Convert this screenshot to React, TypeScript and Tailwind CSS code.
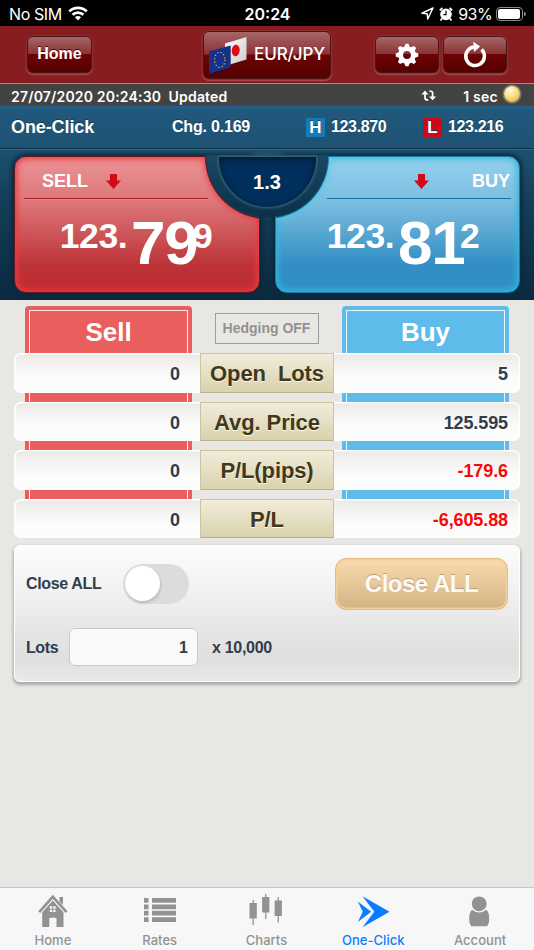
import type { ReactNode } from 'react';

const rows = [
  { label: 'Open  Lots', sell: '0', buy: '5', negative: false },
  { label: 'Avg. Price', sell: '0', buy: '125.595', negative: false },
  { label: 'P/L(pips)', sell: '0', buy: '-179.6', negative: true },
  { label: 'P/L', sell: '0', buy: '-6,605.88', negative: true },
];

const StatusBar = () => (
  <div className="flex h-[26px] items-center bg-black pl-[9px] pr-[8px] pt-px font-['Inter'] text-[16px] text-white">
    <div className="flex flex-1 items-center gap-[6px]">
      <span className="tracking-[-0.4px]">No SIM</span>
      <svg width="20" height="15" viewBox="0 0 20 15" fill="none" stroke="white" strokeWidth="2.7">
        <path d="M1.2 5.4a12.6 12.6 0 0 1 17.6 0" />
        <path d="M4.6 8.8a7.8 7.8 0 0 1 10.8 0" />
        <path d="M10 14.6 6.9 11.3a4.6 4.6 0 0 1 6.2 0Z" fill="white" stroke="none" />
      </svg>
    </div>
    <span className="font-semibold">20:24</span>
    <div className="flex flex-1 items-center justify-end">
      <svg width="13" height="13" viewBox="0 0 13 13" fill="none" stroke="white" strokeWidth="1.5" strokeLinejoin="round">
        <path d="M12 1 1 6.2l5.2.6.5 5.2Z" />
      </svg>
      <svg className="ml-[5px]" width="14" height="14" viewBox="0 0 13 13">
        <circle cx="6.5" cy="6.8" r="5.4" fill="white" />
        <path d="M.7 3.2 3.2.9M12.3 3.2 9.8.9M2.8 10.7l-1.4 1.8M10.2 10.7l1.4 1.8" stroke="white" strokeWidth="1.7" />
        <path d="M6.5 3.5v3.5H4" fill="none" stroke="black" strokeWidth="1.1" />
      </svg>
      <span className="ml-[5px] tracking-[-0.6px]">93%</span>
      <span className="ml-[4px] flex h-[14px] w-[27px] rounded-[4px] border border-[#8a8a8a] p-[1px]">
        <span className="flex-1 rounded-[2px] bg-white" />
        <span className="w-[1px]" />
      </span>
      <span className="ml-[1px] h-[4px] w-[2px] rounded-r-full bg-[#8a8a8a]" />
    </div>
  </div>
);

const GlossButton = ({ className, children }: { className: string; children: ReactNode }) => (
  <button
    className={`flex items-center justify-center rounded-[6px] border border-[#4c1517] bg-[linear-gradient(180deg,#a66668_0%,#8a3335_48%,#6b0305_50%,#560000_100%)] shadow-[0_0_0_1px_#8b2d30,0_1px_1px_1px_#a85255] ${className}`}
  >
    {children}
  </button>
);

const Flags = () => (
  <svg width="38" height="38" viewBox="0 0 38 38">
    <defs>
      <linearGradient id="jp" x1="0" x2="1" y1="0" y2="1">
        <stop offset="0" stopColor="#fff" />
        <stop offset="1" stopColor="#c9c9c9" />
      </linearGradient>
    </defs>
    <path d="M16 7.5 37.5 1v22.5L16 30Z" fill="url(#jp)" />
    <ellipse cx="26.7" cy="14.5" rx="4" ry="5.7" fill="#e30b12" transform="rotate(8 26.7 14.5)" />
    <path d="M.5 16 22 10v22L.5 38.5Z" fill="#000" opacity=".35" />
    <path d="M0 15.5 21.5 9.5v22L0 38Z" fill="#16308c" />
    <ellipse cx="10.8" cy="23.8" rx="5.2" ry="7.6" fill="none" stroke="#d3bd4a" strokeWidth="1.2" strokeDasharray="1.3 2.12" />
  </svg>
);

const NavBar = () => (
  <div className="flex h-[57px] items-center bg-[#871d20] px-[27px] font-['Liberation_Sans'] font-bold text-white">
    <GlossButton className="h-[37px] w-[65px] text-[16px] [text-shadow:0_-1px_0_#400]">
      <span className="-mt-px">Home</span>
    </GlossButton>
    <GlossButton className="ml-[111px] h-[48px] w-[128px] gap-[7px]">
      <Flags />
      <span className="font-['Inter'] text-[17px] font-medium tracking-[-0.1px]">EUR/JPY</span>
    </GlossButton>
    <GlossButton className="ml-[44px] h-[37px] w-[64px]">
      <svg width="24" height="24" viewBox="-12 -12 24 24" fill="white">
        <circle r="6.3" fill="none" stroke="white" strokeWidth="4.8" />
        {[0, 45, 90, 135, 180, 225, 270, 315].map((a) => (
          <path key={a} d="M-2.9-7.5-1.5-11.3H1.5L2.9-7.5Z" transform={`rotate(${a})`} />
        ))}
      </svg>
    </GlossButton>
    <GlossButton className="ml-[4px] h-[37px] w-[64px]">
      <svg width="26" height="28" viewBox="0 0 26 28">
        <path d="M19.6 8.6A9.3 9.3 0 1 1 12 6" fill="none" stroke="white" strokeWidth="3.5" />
        <path d="M11.3.8 18.2 5.6 12 11Z" fill="white" />
      </svg>
    </GlossButton>
  </div>
);

const UpdateBar = () => (
  <div className="flex h-[23px] items-center border-t border-[#989393] bg-[#434343] pl-[11px] pr-[14px] font-['Inter'] text-[14px] font-semibold text-white">
    <span className="flex-1 whitespace-pre pt-[3px] tracking-[0.18px]">27/07/2020 20:24:30  Updated</span>
    <svg width="16" height="13" viewBox="0 0 16 13" fill="none" stroke="white" strokeWidth="1.7">
      <path d="M4 4v5q0 2 3.3 2M8.3 2q3.3 0 3.3 2V9" />
      <path d="M.5 5.4 4 1.6 7.5 5.4ZM8.1 7.4 11.6 11.2l3.5-3.8Z" fill="white" stroke="none" />
    </svg>
    <span className="ml-[26px] pt-[3px] tracking-[0.25px]">1 sec</span>
    <span className="ml-[6px] -mt-[2px] h-[16px] w-[16px] rounded-full bg-[radial-gradient(circle_at_40%_30%,#fffbe0,#f8dc7c_45%,#eaa21d)] shadow-[0_0_0_1.5px_#777]" />
  </div>
);

const SummaryBar = () => (
  <div className="flex h-[43px] items-center border-b border-[#092f45] bg-[linear-gradient(180deg,#24608a_0,#20587b_5px,#1f5273_100%)] pl-[11px] text-[16px] font-bold text-white [text-shadow:0_-1px_0_#153c54]">
    <span className="w-[161px] text-[18px] tracking-[-0.1px]">One-Click</span>
    <span className="w-[134px] tracking-[-0.2px]">Chg. 0.169</span>
    <span className="flex h-[19px] w-[19px] items-center justify-center bg-[#187ab5] pt-px text-[17px]">H</span>
    <span className="ml-[6px] w-[92px] tracking-[-0.35px]">123.870</span>
    <span className="flex h-[19px] w-[19px] items-center justify-center bg-[#cf0818] pt-px text-[17px]">L</span>
    <span className="ml-[6px] tracking-[-0.35px]">123.216</span>
  </div>
);

const DownArrow = () => (
  <svg width="15" height="15" viewBox="0 0 15 15">
    <path d="M4 0h7v6.5h4L7.5 15 0 6.5h4Z" fill="#d20a18" />
  </svg>
);

const Price = ({ head, big, tail }: { head: string; big: string; tail: string }) => (
  <div className="flex items-start text-[35.5px] leading-[40px]">
    <span className="w-[75px] tracking-[-0.35px]">{head}</span>
    <span className="w-[63px] text-[62px] leading-[53px] tracking-[-1.2px]">{big}</span>
    <span className="ml-[-1px]">{tail}</span>
  </div>
);

const Quotes = () => (
  <div className="relative flex h-[151px] justify-between border-b border-[#092b42] border-t border-t-[#246e99] bg-[linear-gradient(180deg,#1d506f_0%,#143e59_35%,#0a2a40_100%)] px-[14px] pt-[6px] font-bold text-white">
    <button className="relative flex h-[137px] w-[246px] flex-col items-start overflow-hidden rounded-[12px] border border-[#64171f] bg-[linear-gradient(180deg,#eb9396_0%,#dc7679_34%,#bd3338_80%,#bf2b30_100%)] shadow-[0_0_4px_2px_#08283c,inset_0_0_6px_2px_#ed3b43]">
      <div className="flex items-center pl-[9px] pt-[12px] text-[18px] leading-[24px]">
        <span className="w-[82px]">SELL</span>
        <DownArrow />
      </div>
      <div className="ml-[9px] mt-[5px] h-[2px] w-[184px] border-b border-[#ea8588] bg-[#a32027]" />
      <div className="ml-[41px] mt-[16px]"><Price head="123." big="79" tail="9" /></div>
      <span className="absolute -top-[61px] left-[191px] h-[122px] w-[122px] rounded-full bg-[#143e59] shadow-[0_0_0_1px_#64171f,0_0_6px_2px_#ed3b43]" />
    </button>
    <button className="relative flex h-[137px] w-[245px] flex-col items-start overflow-hidden rounded-[12px] border border-[#1c7ba1] bg-[linear-gradient(180deg,#96d1ed_0%,#7abde0_34%,#328ec3_80%,#3090c5_100%)] shadow-[0_0_4px_2px_#08283c,inset_0_0_6px_2px_#32b9de]">
      <div className="flex w-full items-center pl-[138px] pr-[9px] pt-[12px] text-[18px] leading-[24px]">
        <DownArrow />
        <span className="flex-1 text-right">BUY</span>
      </div>
      <div className="ml-[51px] mt-[5px] h-[2px] w-[184px] border-b border-[#76c2e7] bg-[#176fa8]" />
      <div className="ml-[47px] mt-[16px]"><Price head="123." big="81" tail="2" /></div>
      <span className="absolute -left-[70px] -top-[61px] h-[122px] w-[122px] rounded-full bg-[#143e59] shadow-[0_0_0_1px_#1c7ba1,0_0_6px_2px_#50cceb]" />
    </button>
    {/* Spread badge in the notch between both quotes */}
    <div className="absolute left-[206px] top-[5px] flex h-[62px] w-[122px] items-center justify-center rounded-b-[61px] bg-[linear-gradient(180deg,#184863,#0c3048)]">
      <div className="-mt-[9px] flex h-[50px] w-[97px] items-center justify-center rounded-b-[49px] bg-[#002f5b] text-[20px] shadow-[0_0_3px_1px_#406d83,inset_0_2px_5px_1px_#051c32]">1.3</div>
    </div>
  </div>
);

const Positions = () => (
  <div className="grid px-[14px] pt-[6px] font-bold">
    <div className="col-start-1 row-start-1 mb-[30px] flex justify-between px-[11px]">
      <div className="w-[167px] rounded-t-[4px] bg-[#ea5e5e] px-[4px] pt-[4px] text-center text-[26px] leading-[43px] text-white">
        <div className="h-full border border-b-0 border-[#ffe9e9]">Sell</div>
      </div>
      <div className="mr-px mt-[7px] flex h-[31px] w-[104px] items-center justify-center border-[1.5px] border-[#9d9d9d] text-[14px] text-[#929292]">Hedging OFF</div>
      <div className="w-[167px] rounded-t-[4px] bg-[#5ebbea] px-[4px] pt-[4px] text-center text-[26px] leading-[43px] text-white">
        <div className="h-full border border-b-0 border-[#e6f7ff]">Buy</div>
      </div>
    </div>
    <div className="z-10 col-start-1 row-start-1 mt-[47px] flex flex-col gap-[9px]">
      {rows.map((row) => (
        <div
          key={row.label}
          className="grid h-[39.5px] grid-cols-[186px_134px_1fr] overflow-hidden rounded-[7px] bg-[linear-gradient(180deg,#e9e8e6_0%,#f4f3f2_30%,#fcfcfc_65%,#fcfcfc_100%)] text-[18px] leading-[42px] text-[#303d4b] shadow-[inset_0_0_0_1.5px_#fff]"
        >
          <span className="pr-[20px] text-right">{row.sell}</span>
          <span className="h-[39.5px] whitespace-pre border border-[#cdc49c] border-b-[#b9b18b] bg-[linear-gradient(180deg,#f1ecdb,#d9d2ad)] text-center text-[22px] leading-[39px] tracking-[-0.1px] text-[#41371b] [text-shadow:0_1px_0_#fffbe8]">{row.label}</span>
          <span className={row.negative ? 'pr-[12px] text-right tracking-[-0.1px] text-[#fb0707]' : 'pr-[12px] text-right tracking-[-0.1px]'}>{row.buy}</span>
        </div>
      ))}
    </div>
  </div>
);

const ClosePanel = () => (
  <div className="mx-[14px] mt-[7px] h-[137px] rounded-[6px] border border-white bg-[linear-gradient(180deg,#fcfcfc_0%,#f4f4f4_25%,#e7e7e7_60%,#e0dfde_83%,#e9e9e9_100%)] pl-[11px] pr-[11px] pt-[11px] text-[16px] font-bold text-[#303d4b] shadow-[0_2px_3px_1px_#aaa]">
    <div className="flex h-[53px] items-center">
      <span className="w-[97px] tracking-[-0.35px]">Close ALL</span>
      <span className="flex h-[40px] w-[66px] items-center rounded-full bg-[#dcdcdc] p-[2px]">
        <span className="h-[35px] w-[35px] rounded-full bg-white shadow-[1px_2px_3px_#bbb]" />
      </span>
      <button className="ml-auto h-[52px] w-[173px] rounded-[11px] border border-[#e5bd7d] bg-[linear-gradient(180deg,#f9dbad,#d3b384)] text-[24px] tracking-[-0.5px] text-[#fcfaf6] shadow-[inset_0_0_0_1.5px_#f2d09b] [text-shadow:0_-1px_0_#b89f7c]">Close ALL</button>
    </div>
    <div className="mt-[18px] flex items-center">
      <span className="w-[43px] pt-px tracking-[-0.4px]">Lots</span>
      <span className="h-[38px] w-[129px] rounded-[6px] border border-[#cacaca] bg-[#fafafa] pr-[9px] text-right leading-[37px]">1</span>
      <span className="ml-[14px] pt-px tracking-[-0.3px]">x 10,000</span>
    </div>
  </div>
);

const tabs = [
  {
    label: 'Home',
    icon: (
      <svg width="30" height="34" viewBox="0 0 30 34" fill="currentColor">
        <path d="M21.5 3h3.5v8l-3.5-3.6Z" />
        <path d="m1.2 18.2 13.6-15.4L28.6 18.2" fill="none" stroke="currentColor" strokeWidth="2.6" />
        <path fillRule="evenodd" d="M14.8 6.4 25.5 18.3V33h-7v-8.7q-3.6-1.4-7.2 0V33H4.2V18.3ZM11.8 12.3v2.4h2.4v-2.4Zm3.4 0v2.4h2.4v-2.4Zm-3.4 3.4v2.4h2.4v-2.4Zm3.4 0v2.4h2.4v-2.4Z" />
      </svg>
    ),
  },
  {
    label: 'Rates',
    icon: (
      <svg width="32" height="34" viewBox="0 0 32 34" fill="currentColor">
        {[4, 10.5, 16.8, 23.2].map((y) => (
          <path key={y} d={`M0 ${y}h4.5v4.8H0ZM8 ${y}h24v4.8H8Z`} />
        ))}
      </svg>
    ),
  },
  {
    label: 'Charts',
    icon: (
      <svg className="-ml-[2px]" width="34" height="34" viewBox="0 0 34 34" fill="currentColor">
        <path d="M3.5 6h1.3v3h3v15.5h-3V31H3.5v-6.5H.5V9h3ZM16.1 0h1.3v3h3v15.5h-3V25h-1.3v-6.5h-3V3h3ZM28.6 3h1.3v3.5h3V22h-3v6.5h-1.3V22h-3V6.5h3Z" />
      </svg>
    ),
  },
  {
    label: 'One-Click',
    icon: (
      <svg className="-ml-[2px]" width="34" height="34" viewBox="0 0 34 34" fill="currentColor">
        <path d="M6.5 2.3 33.5 17.8 6.5 33.3 18.3 17.8Z" />
        <path d="M1.8 7.6 15.2 17.8 1.8 28 6.8 17.8Z" />
      </svg>
    ),
  },
  {
    label: 'Account',
    icon: (
      <svg className="-ml-[3px]" width="22" height="34" viewBox="0 0 22 34" fill="currentColor">
        <circle cx="11.2" cy="9.8" r="7.4" />
        <path d="M4 15.8q7.2 5.6 14.4 0Q21.5 19 21.2 25.5 21.2 30 19.2 32.3H3.2Q1.2 30 1.2 25.5 1 19 4 15.8Z" />
      </svg>
    ),
  },
];

const TabBar = () => (
  <div className="grid h-[63px] grid-cols-5 border-t border-[#c5c5c1] bg-[#f7f7f7] font-['Inter'] text-[13px] font-medium leading-[16px]">
    {tabs.map((tab) => (
      <div key={tab.label} className={`flex flex-col items-center pt-[6px] ${tab.label === 'One-Click' ? 'text-[#087dff]' : 'text-[#929292]'}`}>
        {tab.icon}
        <span className="-ml-px mt-[4px] tracking-[0.05px]">{tab.label}</span>
      </div>
    ))}
  </div>
);

export default function App() {
  return (
    <div className="flex h-[950px] w-[534px] flex-col overflow-hidden bg-[#e8e7e3] font-['Liberation_Sans']">
      <StatusBar />
      <NavBar />
      <UpdateBar />
      <SummaryBar />
      <Quotes />
      <Positions />
      <ClosePanel />
      <div className="flex-1" />
      <TabBar />
    </div>
  );
}
